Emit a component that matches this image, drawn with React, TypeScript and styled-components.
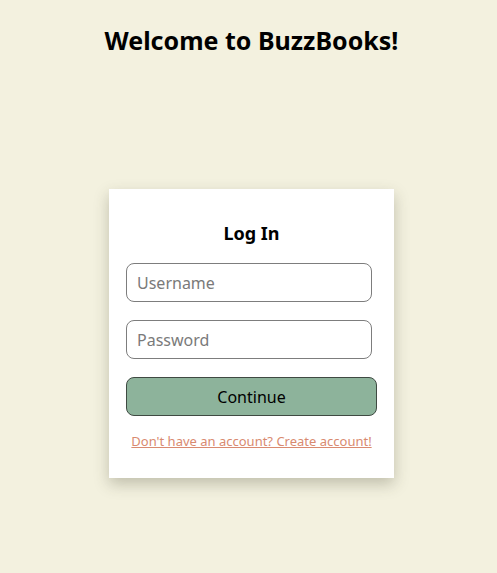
import React from 'react';
import styled, { createGlobalStyle } from 'styled-components';

const GlobalStyle = createGlobalStyle`
  html, body {
    margin: 0;
    padding: 0;
    background: #f3f1df;
    font-family: "Noto Sans", "DejaVu Sans", sans-serif;
  }
`;

const Page = styled.main`
  min-height: 573px;
  padding-left: 6px;
  display: flex;
  flex-direction: column;
  align-items: center;
`;

const Title = styled.h1`
  margin: 20px 0 0;
  font-size: 25px;
  line-height: 40px;
  font-weight: 700;
  color: #000;
`;

const Card = styled.form`
  margin-top: 129px;
  width: 285px;
  box-sizing: border-box;
  padding: 26px 17px 28px;
  background: #ffffff;
  box-shadow: 0 6px 14px rgba(60, 60, 40, 0.28);
  display: flex;
  flex-direction: column;
  align-items: flex-start;
`;

const CardTitle = styled.h2`
  align-self: stretch;
  margin: 0 0 12px;
  text-align: center;
  font-size: 18px;
  line-height: 36px;
  font-weight: 700;
  color: #000;
`;

const Field = styled.input`
  width: 246px;
  height: 39px;
  box-sizing: border-box;
  margin-bottom: 18px;
  padding: 0 10px;
  border: 1px solid #7d7d7d;
  border-radius: 8px;
  background: #fff;
  font-family: inherit;
  font-size: 16px;
  color: #000;
  outline: none;

  &::placeholder {
    color: #7a7a7a;
  }
`;

const Submit = styled.button`
  width: 100%;
  height: 39px;
  box-sizing: border-box;
  border: 1px solid #3f4a42;
  border-radius: 8px;
  background: #8db39b;
  font-family: inherit;
  font-size: 16px;
  color: #000;
  cursor: pointer;
`;

const SignupLink = styled.a`
  align-self: center;
  margin-top: 16px;
  font-size: 13px;
  line-height: 18px;
  color: #d98a70;
  text-decoration: underline;
  cursor: pointer;
`;

export default function App() {
  return (
    <>
      <GlobalStyle />
      <Page>
        <Title>Welcome to BuzzBooks!</Title>
        <Card onSubmit={(e) => e.preventDefault()}>
          <CardTitle>Log In</CardTitle>
          <Field type="text" placeholder="Username" />
          <Field type="password" placeholder="Password" />
          <Submit type="submit">Continue</Submit>
          <SignupLink>Don't have an account? Create account!</SignupLink>
        </Card>
      </Page>
    </>
  );
}
